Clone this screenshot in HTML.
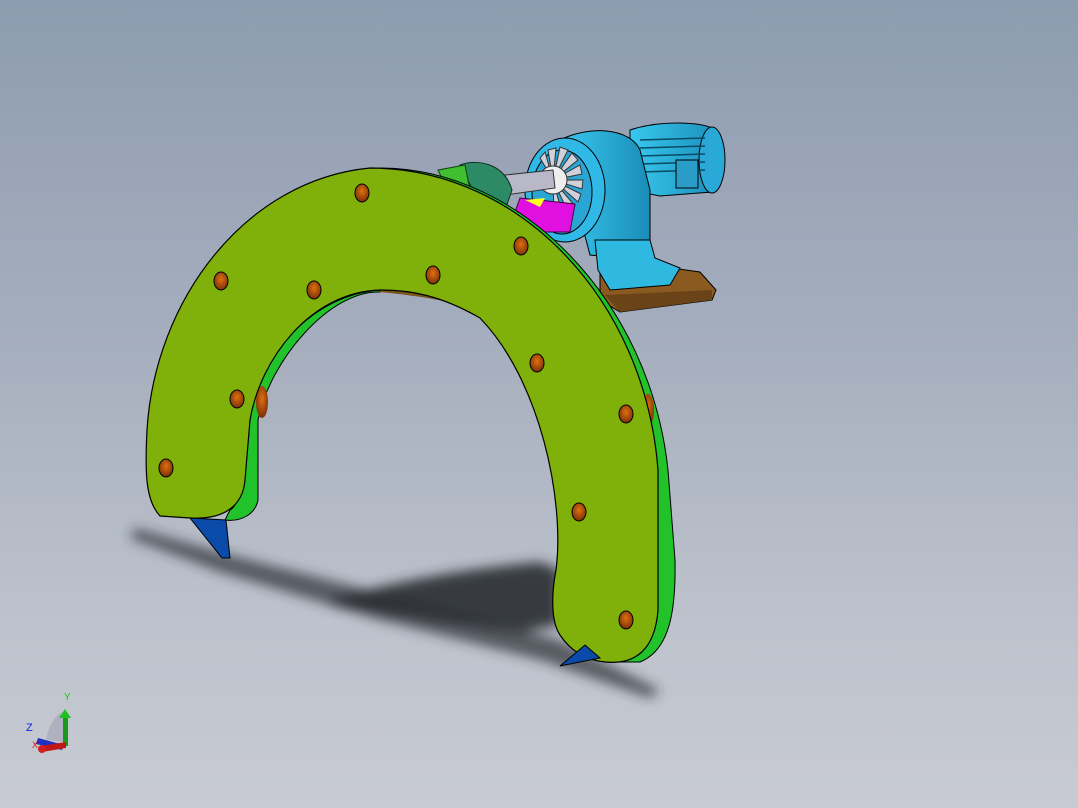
<!DOCTYPE html>
<html><head><style>
html,body{margin:0;padding:0;width:1078px;height:808px;overflow:hidden}
body{background:linear-gradient(180deg,#8d9cb0 0%,#a4adbd 40%,#bcc1cb 75%,#c8cbd3 100%);font-family:"Liberation Sans",sans-serif}
svg{position:absolute;left:0;top:0}
</style></head><body>
<svg width="1078" height="808" viewBox="0 0 1078 808">
<defs>
<filter id="bl" x="-20%" y="-50%" width="140%" height="200%"><feGaussianBlur stdDeviation="6"/></filter>
<radialGradient id="hole" cx="50%" cy="40%" r="60%"><stop offset="0" stop-color="#e07010"/><stop offset="1" stop-color="#7a3008"/></radialGradient>
<linearGradient id="mot" x1="0" x2="1"><stop offset="0" stop-color="#38c8ee"/><stop offset="1" stop-color="#1a8cb8"/></linearGradient>
</defs>
<g filter="url(#bl)" fill="#2a2c32">
<path d="M135,528 L230,555 L400,598 L560,640 L660,690 L650,698 L540,660 L380,620 L220,572 L130,538 Z" opacity=".7"/>
<path d="M330,600 C380,585 450,570 540,562 L560,570 L560,625 L520,632 C460,625 400,615 330,605 Z" opacity=".9"/>
</g>
<path d="M600,258 L700,272 L716,290 L712,300 L620,312 L600,300 Z" fill="#8a5a20" stroke="#000" stroke-width="1"/>
<path d="M605,295 L712,290 L712,300 L620,312 Z" fill="#6a4418"/>
<path d="M630,130 C660,120 700,122 712,128 C725,140 726,180 712,192 L660,196 L630,190 Z" fill="url(#mot)" stroke="#000"/>
<ellipse cx="712" cy="160" rx="13" ry="33" fill="#2aa8d8" stroke="#000"/>
<g stroke="#0a4a66" stroke-width="1.5"><line x1="640" y1="140" x2="705" y2="138"/><line x1="640" y1="148" x2="705" y2="146"/><line x1="640" y1="156" x2="705" y2="154"/><line x1="640" y1="164" x2="705" y2="162"/><line x1="640" y1="172" x2="705" y2="170"/></g>
<rect x="676" y="160" width="22" height="28" fill="#2a9cc8" stroke="#000"/>
<path d="M560,140 C590,125 630,128 640,150 L650,190 L650,250 L620,258 L590,255 Z" fill="url(#mot)" stroke="#000"/>
<path d="M595,240 L650,240 L655,258 L680,268 L670,285 L610,290 L598,270 Z" fill="#2fb8e0" stroke="#000"/>
<ellipse cx="565" cy="190" rx="40" ry="52" fill="#30b8e6" stroke="#000"/>
<ellipse cx="562" cy="192" rx="30" ry="42" fill="#2aa6d4" stroke="#000"/>
<g stroke="#333" stroke-width="1" fill="#d0d0da">
<path d="M553,180 L548,150 L556,148 Z"/><path d="M553,180 L560,147 L568,150 Z"/><path d="M553,180 L572,153 L578,160 Z"/><path d="M553,180 L580,165 L582,174 Z"/><path d="M553,180 L583,180 L582,189 Z"/><path d="M553,180 L581,194 L578,202 Z"/><path d="M553,180 L575,206 L568,212 Z"/><path d="M553,180 L562,213 L554,215 Z"/><path d="M553,180 L540,158 L545,152 Z"/>
</g>
<circle cx="553" cy="180" r="14" fill="#eee" stroke="#333"/>
<path d="M505,175 L553,170 L555,188 L505,195 Z" fill="#b8b8c8" stroke="#333"/>
<path d="M520,198 L575,204 L570,232 L540,232 L515,212 Z" fill="#e010e0" stroke="#400040"/>
<path d="M525,200 L545,198 L540,207 Z" fill="#ffff20"/>
<path d="M460,165 C480,158 505,165 512,190 L505,210 L478,200 Z" fill="#2c8a64" stroke="#0a3020"/>
<path d="M438,170 L465,165 L470,190 L445,185 Z" fill="#40c030" stroke="#104010"/>
<path d="M380,168 C520,168 650,300 668,470 L675,560 C676,610 670,650 640,662 L605,662 L610,655 C640,650 657,620 657,580 L650,470 C640,300 520,175 380,172 Z" fill="#22c22a" stroke="#000"/>
<path d="M380,292 C330,290 270,360 258,420 L258,500 C255,515 240,522 225,520 L230,510 C240,505 242,480 242,450 C250,360 310,295 380,290 Z" fill="#22c22a" stroke="#000"/>
<path d="M380,290 C430,292 480,305 505,322 L480,310 C440,298 400,294 380,292 Z" fill="#7a5418"/>
<ellipse cx="648" cy="410" rx="6" ry="16" fill="url(#hole)"/>
<ellipse cx="650" cy="622" rx="6" ry="14" fill="url(#hole)"/>
<ellipse cx="262" cy="402" rx="6" ry="16" fill="url(#hole)"/>
<path d="M160,516 C145,500 145,470 147,430 C155,300 245,180 370,168 C520,168 645,300 658,470 L658,610 C655,650 635,665 605,662 C585,660 570,650 560,635 C550,620 552,590 556,570 C565,500 540,380 480,318 C440,295 410,290 380,290 C310,292 260,360 250,420 L245,480 C243,505 225,520 190,518 Z" fill="#80b00a" stroke="#000" stroke-width="1.2"/>
<path d="M190,518 L226,520 L230,558 L222,558 Z" fill="#0a4aa8" stroke="#000"/>
<path d="M585,645 L600,658 L560,666 Z" fill="#0a4aa8" stroke="#000"/>
<g fill="url(#hole)" stroke="#000" stroke-width="1">
<ellipse cx="362" cy="193" rx="7" ry="9"/>
<ellipse cx="521" cy="246" rx="7" ry="9"/>
<ellipse cx="221" cy="281" rx="7" ry="9"/>
<ellipse cx="314" cy="290" rx="7" ry="9"/>
<ellipse cx="433" cy="275" rx="7" ry="9"/>
<ellipse cx="537" cy="363" rx="7" ry="9"/>
<ellipse cx="237" cy="399" rx="7" ry="9"/>
<ellipse cx="626" cy="414" rx="7" ry="9"/>
<ellipse cx="166" cy="468" rx="7" ry="9"/>
<ellipse cx="579" cy="512" rx="7" ry="9"/>
<ellipse cx="626" cy="620" rx="7" ry="9"/>
</g>
<path d="M46,740 C50,720 60,710 66,712 L66,742 Z" fill="#aab" opacity=".8"/>
<rect x="63" y="716" width="5" height="30" fill="#1a9a1a"/>
<path d="M59,718 L65,709 L71,718 Z" fill="#20c020"/>
<path d="M38,738 L64,745 L62,750 L36,744 Z" fill="#2030c0"/>
<path d="M40,746 L66,742 L66,748 L42,752 Z" fill="#c01818"/>
<circle cx="42" cy="749" r="4" fill="#d02020"/>
<text x="64" y="700" font-size="10" fill="#10d010">Y</text>
<text x="26" y="731" font-size="11" fill="#1020e0">Z</text>
<text x="32" y="748" font-size="9" fill="#e01010">X</text>
</svg>
</body></html>
